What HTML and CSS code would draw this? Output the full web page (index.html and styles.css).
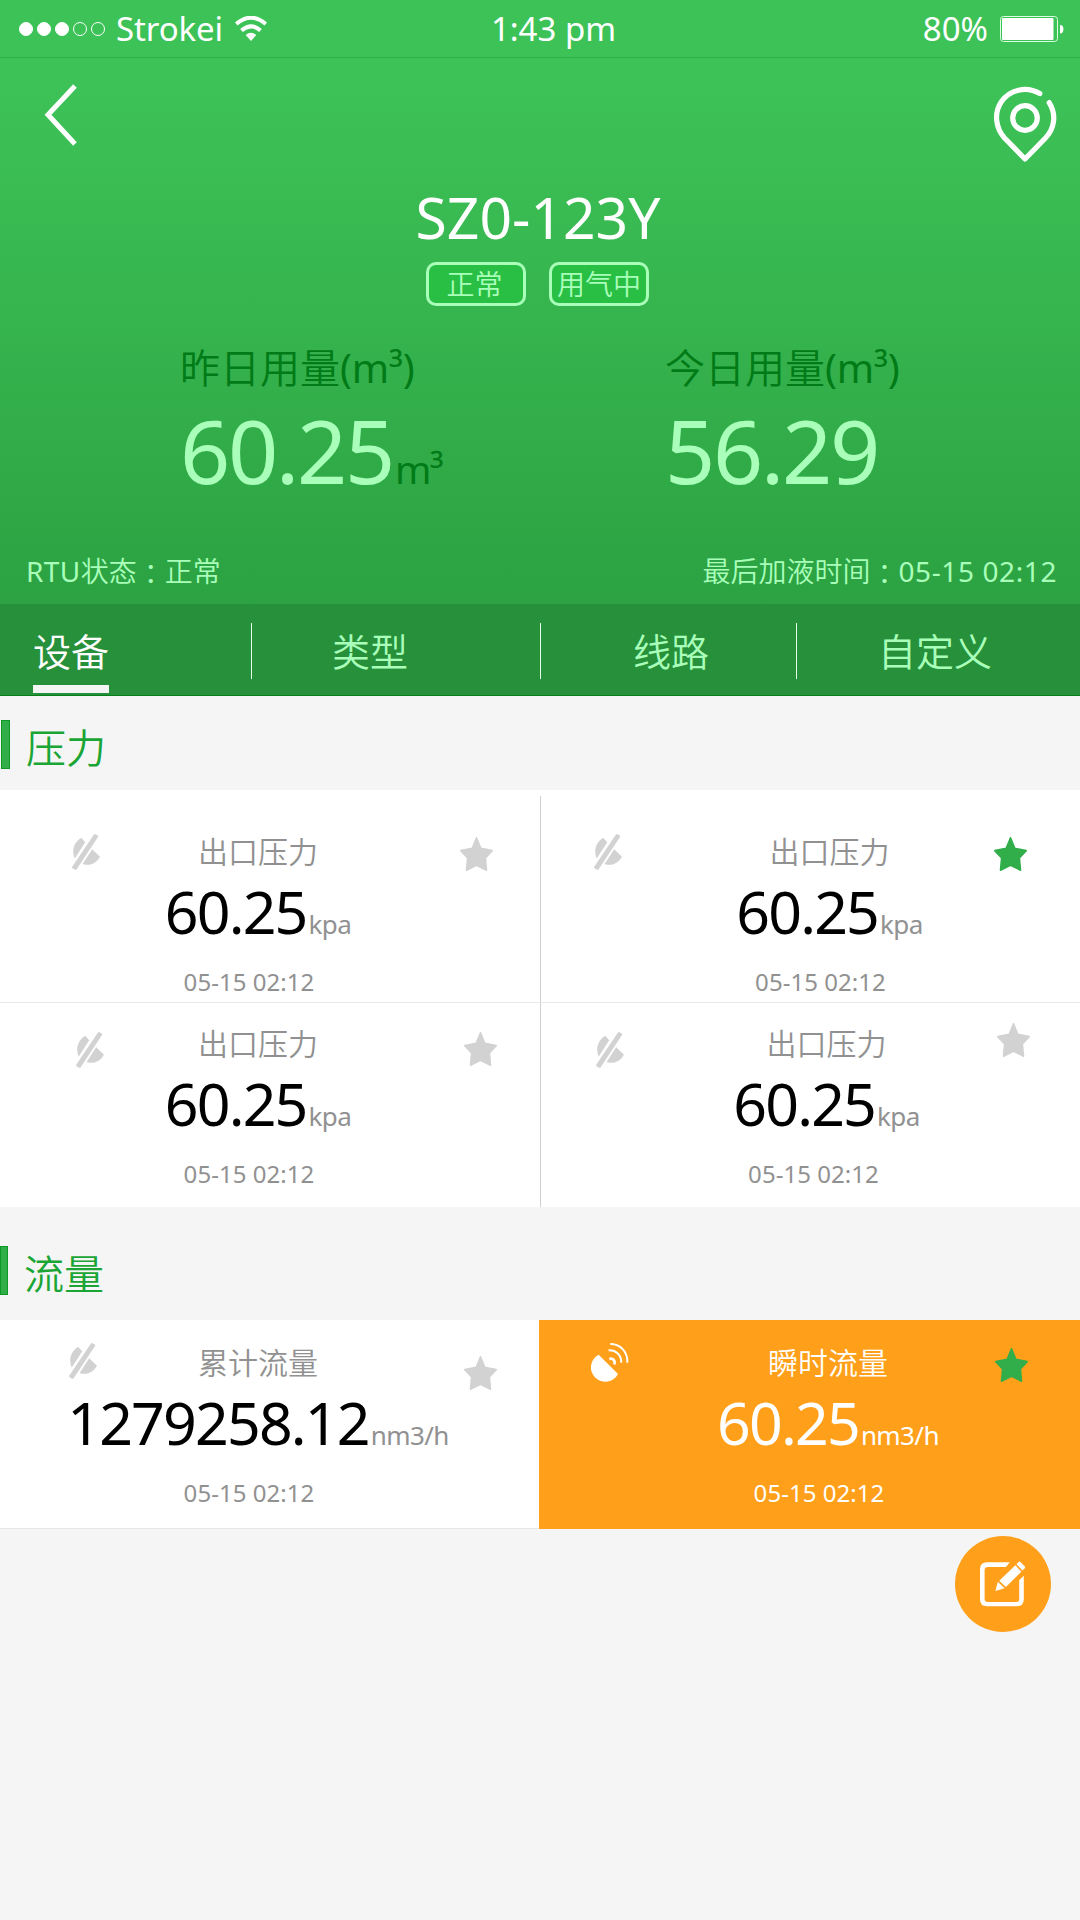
FILE: index.html
```html
<!DOCTYPE html>
<html lang="zh-CN">
<head>
    <meta charset="UTF-8">
    <title>设备详情</title>
    <link rel="stylesheet" href="styles.css">
</head>
<body>
<!-- 公用图标 -->
<svg class="svg_defs" width="0" height="0">
    <symbol id="icon-off" viewBox="0 0 28 36">
        <path d="M9.2 3.8L13.2 8.2L2.8 24.4C0 19 .2 9 9.2 3.8Z"/>
        <path d="M20.2 15.3L28 22.8C24 29.5 18 32.5 10.6 30Z"/>
        <path d="M21.8 .7Q22.5 -.2 23.3 .2L25.8 1.6Q26.600 2.200 26 3.100L4.700 35.200Q4 36.200 3 35.700L.6 34.200Q-.4 33.600 .2 32.700Z"/>
    </symbol>
    <symbol id="icon-star" viewBox="0 0 33 34">
        <path stroke="currentColor" stroke-width="1.6" stroke-linejoin="round" d="M16.5 .8L20.8 11.4L32.2 13.6L25.4 21L26.5 33.2L16.5 28.2L6.5 33.2L7.6 21L.8 13.6L12.2 11.4Z"/>
    </symbol>
</svg>
<div class="div_container">
    <div class="div_head">
        <div class="statusbar">
            <div class="status_left">
                <i class="dot on"></i><i class="dot on"></i><i class="dot on"></i><i class="dot"></i><i class="dot"></i>
                <span class="carrier">Strokei</span>
                <svg class="wifi" width="32" height="25" viewBox="0 0 32 25">
                    <path d="M1.2 8Q16 -4.5 30.8 8" fill="none" stroke="#fff" stroke-width="4"/>
                    <path d="M6.5 14.6Q16 6 25.5 14.6" fill="none" stroke="#fff" stroke-width="4"/>
                    <path d="M10.7 19Q16 14.4 21.3 19L16 25Z" fill="#fff"/>
                </svg>
            </div>
            <div class="status_time">1:43 pm</div>
            <div class="status_right">
                <span>80%</span>
                <svg width="64" height="26" viewBox="0 0 64 26">
                    <rect x=".5" y=".5" width="57" height="25" rx="3" fill="none" stroke="#d9ffe0"/>
                    <rect x="2" y="2" width="51.5" height="22" rx="1" fill="#fff"/>
                    <path d="M60 9Q63.4 9 63.4 13.2T60 17.6Z" fill="#fff"/>
                </svg>
            </div>
        </div>
        <div class="navbar">
            <svg class="back" width="34" height="62" viewBox="0 0 34 62">
                <path d="M31 2L4 30.8L31 60" fill="none" stroke="#fff" stroke-width="5"/>
            </svg>
            <svg class="pin" width="64" height="76" viewBox="0 0 64 76">
                <g fill="none" stroke="#fff" stroke-width="5.2" stroke-linecap="round" stroke-linejoin="round">
                    <path d="M46.8 7.6C33 -.6 16.5 4 8.5 15.5C.6 27 2.6 42 11.5 52L32 73L52.5 52C62 42 63.4 28 56.2 16.6"/>
                    <circle cx="32" cy="32" r="12.3"/>
                </g>
            </svg>
        </div>
        <h1 class="title">SZ0-123Y</h1>
        <div class="tags">
            <span class="tag tag_ok">正常</span>
            <span class="tag">用气中</span>
        </div>
        <div class="usage">
            <div class="usage_item">
                <div class="usage_name">昨日用量<em>(m³)</em></div>
                <div class="usage_num">60.25<small>m³</small></div>
            </div>
            <div class="usage_item">
                <div class="usage_name">今日用量<em>(m³)</em></div>
                <div class="usage_num">56.29</div>
            </div>
        </div>
        <div class="state">
            <div><span class="rtu">RTU</span>状态<span class="colon" lang="zh-TW">：</span>正常</div>
            <div>最后加液时间<span class="colon" lang="zh-TW">：</span><span class="date">05-15 02:12</span></div>
        </div>
    </div>
    <div class="tabs">
        <div class="tab tab1 active"><span>设备</span></div>
        <div class="tab tab2"><span>类型</span></div>
        <div class="tab tab3"><span>线路</span></div>
        <div class="tab tab4"><span>自定义</span></div>
    </div>

    <h2 class="section section_pressure">压力</h2>
    <div class="cards pressure">
        <div class="card c1">
            <div class="card_head">
                <svg class="off"><use href="#icon-off"/></svg>
                <span>出口压力</span>
                <svg class="star"><use href="#icon-star"/></svg>
            </div>
            <div class="num">60.25<small>kpa</small></div>
            <div class="time">05-15 02:12</div>
        </div>
        <div class="card c2">
            <div class="card_head">
                <svg class="off"><use href="#icon-off"/></svg>
                <span>出口压力</span>
                <svg class="star on"><use href="#icon-star"/></svg>
            </div>
            <div class="num">60.25<small>kpa</small></div>
            <div class="time">05-15 02:12</div>
        </div>
        <div class="card c3">
            <div class="card_head">
                <svg class="off"><use href="#icon-off"/></svg>
                <span>出口压力</span>
                <svg class="star"><use href="#icon-star"/></svg>
            </div>
            <div class="num">60.25<small>kpa</small></div>
            <div class="time">05-15 02:12</div>
        </div>
        <div class="card c4">
            <div class="card_head">
                <svg class="off"><use href="#icon-off"/></svg>
                <span>出口压力</span>
                <svg class="star"><use href="#icon-star"/></svg>
            </div>
            <div class="num">60.25<small>kpa</small></div>
            <div class="time">05-15 02:12</div>
        </div>
    </div>

    <h2 class="section section_flow">流量</h2>
    <div class="cards flow">
        <div class="card c5">
            <div class="card_head">
                <svg class="off"><use href="#icon-off"/></svg>
                <span>累计流量</span>
                <svg class="star"><use href="#icon-star"/></svg>
            </div>
            <div class="num">1279258.12<small>nm3/h</small></div>
            <div class="time">05-15 02:12</div>
        </div>
        <div class="card c6">
            <div class="card_head">
                <svg class="dish" viewBox="0 0 38 40">
                    <path d="M7.7 11.7L27 30.9A14.3 14.3 0 1 1 7.7 11.7Z" fill="#fff"/>
                    <g fill="none" stroke="#fff" stroke-width="2">
                        <path d="M19.3 1C29 .8 37 8.5 36.3 19.8"/>
                        <path d="M17.5 7.3C25 6.8 30.6 12 30.2 19.6"/>
                        <path d="M18.3 16C21.5 14.7 24.8 17.5 23.2 21.5" stroke-width="2.6"/>
                    </g>
                </svg>
                <span>瞬时流量</span>
                <svg class="star on"><use href="#icon-star"/></svg>
            </div>
            <div class="num">60.25<small>nm3/h</small></div>
            <div class="time">05-15 02:12</div>
        </div>
    </div>
    <div class="edit">
        <svg width="46" height="46" viewBox="0 0 46 46" fill="#fff">
            <path d="M29.8 1.3H7Q0 1.3 0 8.3V38.3Q0 45.3 7 45.3H36.8Q43.8 45.3 43.8 38.3V14.7L39.2 19.3V38Q39.2 41 36.2 41H7.8Q4.6 41 4.6 38V9Q4.6 6 7.8 6H26Z"/>
            <path d="M19.2 19.8L35.4 4.3L41.3 10.7L25.9 26Z"/>
            <path d="M15.4 30L17.8 20.8L24.7 27.3Z"/>
            <path d="M36.5 3.2L38.5 1Q39.5 0 40.5 1L44.6 5.2Q45.5 6.2 44.7 7.2L42.5 9.5Z"/>
        </svg>
    </div>
</div>
</body>
</html>
```
FILE: styles.css
```css
html,body,div,h1,h2{
    margin: 0;
    padding: 0;
}
body{
    background-color: #f5f5f5;
    font-family: "Noto Sans", "Noto Sans CJK SC", sans-serif;
}
h1,h2{
    font-weight: normal;
}
em,i{
    font-style: normal;
}
svg{
    display: block;
    flex: none;
}
.svg_defs{
    position: absolute;
}
.div_container{
    width: 1080px;
    height: 1920px;
    overflow: hidden;
}
/* 头部 */
.div_head{
    height: 604px;
    background: linear-gradient(#3dc257 0, #3dc257 90px, #2ca242 604px);
    color: #fff;
}
.statusbar{
    box-sizing: border-box;
    height: 58px;
    border-bottom: 1px solid #2cb244;
    display: grid;
    grid-template-columns: 1fr auto 1fr;
    font-size: 33px;
    line-height: 57px;
}
.status_left{
    display: flex;
    align-items: center;
    gap: 4px;
    padding-left: 19px;
}
.dot{
    box-sizing: border-box;
    width: 14px;
    height: 14px;
    border: 1px solid #fff;
    border-radius: 50%;
}
.dot.on{
    background-color: #fff;
}
.carrier{
    margin-left: 7px;
    letter-spacing: -0.1px;
}
.wifi{
    margin-left: 8px;
}
.status_time{
    padding-left: 27px;
}
.status_right{
    display: flex;
    justify-content: flex-end;
    align-items: center;
    gap: 12px;
    padding-right: 16px;
}
.navbar{
    height: 124px;
    display: flex;
    justify-content: space-between;
    align-items: flex-start;
}
.back{
    margin: 26px 0 0 44px;
}
.pin{
    margin: 28px 23px 0 0;
}
.title{
    height: 70px;
    font-size: 57px;
    line-height: 71px;
    text-align: center;
    padding-right: 4px;
}
.tags{
    display: flex;
    justify-content: center;
    gap: 23px;
    padding: 10px 5px 0 0;
}
.tag{
    box-sizing: border-box;
    width: 100px;
    height: 44px;
    border: 3px solid #a9ffba;
    border-radius: 10px;
    background-color: #29bf45;
    color: #a9ffba;
    font-size: 28px;
    font-weight: 350;
    line-height: 38px;
    text-align: center;
}
.tag_ok{
    padding-right: 3px;
}
.usage{
    display: grid;
    grid-template-columns: 485px 1fr;
    padding: 34px 0 0 180px;
}
.usage_name{
    color: #007b17;
    font-size: 40px;
    font-weight: 350;
    line-height: 56px;
}
.usage_name em{
    font-weight: 400;
    letter-spacing: -0.2px;
}
.usage_num{
    height: 100px;
    margin-top: 4px;
    color: #a9ffba;
    font-size: 88px;
    line-height: 101px;
    letter-spacing: -2.4px;
}
.usage_num small{
    margin-left: 2px;
    color: #007b17;
    font-size: 39px;
    line-height: 0;
    letter-spacing: -1.5px;
}
.state{
    display: flex;
    justify-content: space-between;
    padding: 51px 23px 0 26px;
    color: #a9ffba;
    font-size: 28px;
    font-weight: 350;
    line-height: 40px;
}
.rtu,.date{
    font-weight: 400;
}
.rtu{
    letter-spacing: 0.4px;
}
.date{
    letter-spacing: 0.6px;
}
/* 冒号居中 */
.colon{
    font-family: "Noto Sans CJK TC", sans-serif;
    line-height: 0;
    vertical-align: -3px;
}
/* 选项卡 */
.tabs{
    box-sizing: border-box;
    height: 92px;
    border-bottom: 1px solid #067f1b;
    background-color: #27903a;
    display: grid;
    grid-template-columns: 252px 289px 256px 1fr;
    color: #a9ffba;
    font-size: 38px;
    font-weight: 350;
    line-height: 94px;
}
.tab{
    height: 56px;
    margin-top: 19px;
    border-right: 1px solid #e5ffe9;
    box-sizing: border-box;
}
.tab span{
    display: block;
    width: max-content;
    margin-top: -19px;
}
.tab4{
    border-right: none;
}
.tab1 span{
    margin-left: 33px;
}
.tab2 span{
    margin-left: 80px;
}
.tab3 span{
    margin-left: 92px;
}
.tab4 span{
    margin-left: 81px;
}
.tab.active span{
    height: 81px;
    border-bottom: 8px solid #f5f5f5;
    color: #fff;
}
/* 分组标题 */
.section{
    box-sizing: border-box;
    color: #1aa534;
    font-size: 40px;
    font-weight: 350;
    line-height: 55px;
}
.section::before{
    content: "";
    float: left;
    box-sizing: border-box;
    width: 9px;
    height: 49px;
    margin-right: 16px;
    border: 1px solid #0a9a25;
    background-color: #31ae4a;
}
.section_pressure{
    height: 94px;
    padding: 24px 0 0 1px;
}
.section_flow{
    height: 113px;
    padding-top: 39px;
}
.section_flow::before{
    width: 8px;
}
/* 数据卡片 */
.cards{
    display: grid;
    grid-template-columns: 540px 540px;
    background-color: #fff;
}
.card{
    box-sizing: border-box;
    color: #919191;
    text-align: center;
}
.card_head{
    height: 40px;
    display: grid;
    grid-template-columns: 1fr 120px 1fr;
    font-size: 30px;
    font-weight: 350;
    line-height: 41px;
}
.off{
    width: 28px;
    height: 36px;
    fill: #d2d2d2;
}
.dish{
    width: 38px;
    height: 40px;
}
.star{
    width: 33px;
    height: 34px;
    justify-self: end;
    color: #d2d2d2;
    fill: currentColor;
}
.star.on{
    color: #31ae4a;
}
.num{
    height: 66px;
    margin-top: 7px;
    color: #000;
    font-size: 59px;
    line-height: 67px;
    letter-spacing: -1.8px;
    white-space: nowrap;
}
.num small{
    margin-left: 2px;
    color: #919191;
    font-size: 26px;
    letter-spacing: -0.6px;
}
.time{
    margin-top: 23px;
    padding-right: 18px;
    font-size: 24px;
    line-height: 30px;
    letter-spacing: 0.05px;
}
.pressure{
    grid-template-rows: 213px 204px;
    background: linear-gradient(#cfcfcf, #cfcfcf) 540px 6px / 1px 411px no-repeat #fff;
}
.flow{
    grid-template-rows: 209px;
}
.c1,.c2{
    padding-top: 41px;
    border-bottom: 1px solid #e8e8e8;
}
.c3,.c4{
    padding-top: 20px;
}
.c5{
    padding-top: 22px;
    border-bottom: 1px solid #e8e8e8;
}
.c1,.c3,.c5{
    padding-right: 24px;
}
.c2{
    padding-left: 39px;
}
.c4{
    padding-left: 33px;
}
.c6{
    margin-left: -1px;
    padding-top: 22px;
    padding-left: 37px;
    background-color: #ff9f1a;
}
.c6,.c6 .num,.c6 small{
    color: #fff;
}
.c1 .off{
    margin: 3px 0 0 72px;
}
.c1 .star{
    margin: 6px 23px 0 0;
}
.c2 .off{
    margin: 3px 0 0 15px;
}
.c2 .star{
    margin: 6px 53px 0 0;
}
.c3 .off{
    margin: 9px 0 0 76px;
}
.c3 .star{
    margin: 9px 19px 0 0;
}
.c4 .off{
    margin: 9px 0 0 23px;
}
.c4 .star{
    margin: 0 50px 0 0;
}
.c4 .time{
    padding-right: 26px;
}
.c5 .off{
    margin: 1px 0 0 69px;
}
.c5 .star{
    margin: 14px 19px 0 0;
}
.c6 .dish{
    margin: 1px 0 0 15px;
}
.c6 .star{
    margin: 6px 52px 0 0;
}
/* 编辑按钮 */
.edit{
    box-sizing: border-box;
    width: 96px;
    height: 96px;
    margin: 7px 29px 0 auto;
    border-radius: 50%;
    background-color: #ff9f1a;
    display: flex;
    justify-content: center;
    align-items: center;
}
```
